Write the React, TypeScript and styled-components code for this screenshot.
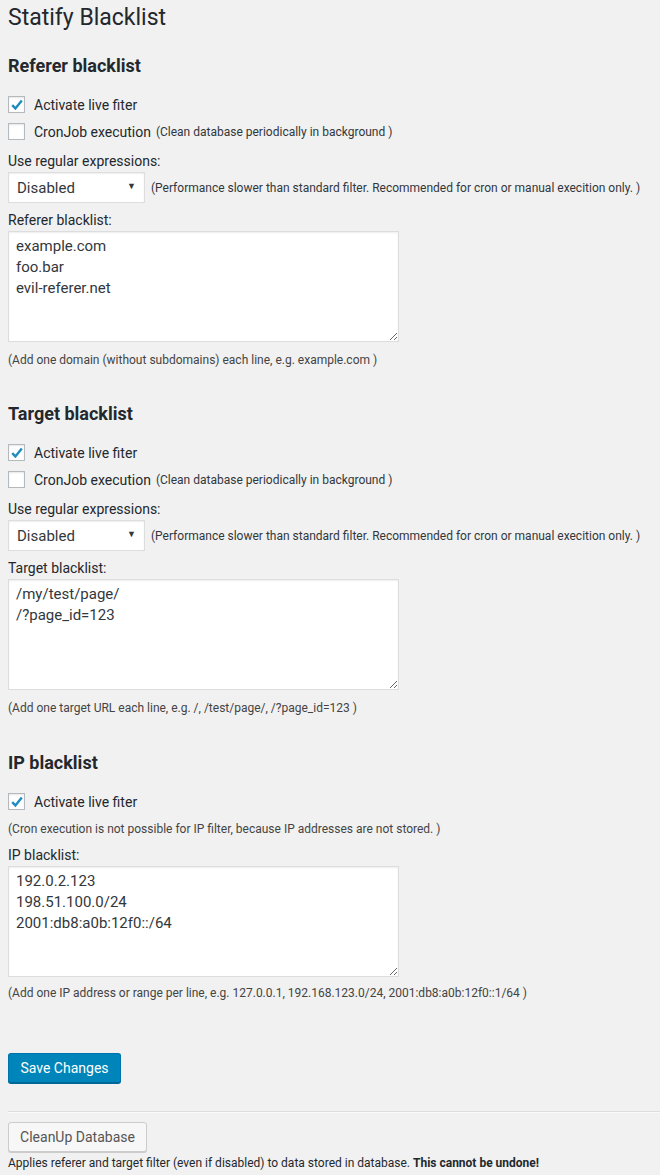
import styled, { createGlobalStyle } from "styled-components";

const GlobalStyle = createGlobalStyle`
  body {
    margin: 0;
    background: #f1f1f1;
    color: #23282d;
    font-family: Roboto, "Liberation Sans", sans-serif;
    font-size: 14px;
  }
`;

interface FilterSection {
  title: string;
  live: boolean;
  cron?: boolean;
  listLabel: string;
  entries: string[];
  hint: string;
}

const sections: FilterSection[] = [
  {
    title: "Referer blacklist",
    live: true,
    cron: false,
    listLabel: "Referer blacklist:",
    entries: ["example.com", "foo.bar", "evil-referer.net"],
    hint: "(Add one domain (without subdomains) each line, e.g. example.com )",
  },
  {
    title: "Target blacklist",
    live: true,
    cron: false,
    listLabel: "Target blacklist:",
    entries: ["/my/test/page/", "/?page_id=123"],
    hint: "(Add one target URL each line, e.g. /, /test/page/, /?page_id=123 )",
  },
];

const Check = ({ checked }: { checked: boolean }) => (
  <Box>
    {checked && (
      <svg width="14" height="14" viewBox="0 0 14 14">
        <path d="M2.2 7.2 L5.4 10.4 L11.8 2.6" fill="none" stroke="#1e8cbe" strokeWidth="2.4" />
      </svg>
    )}
  </Box>
);

const RegexSelect = () => (
  <SelectRow>
    <SelectWrap>
      <Select defaultValue="0">
        <option value="0">Disabled</option>
        <option value="1">Case-sensitive</option>
        <option value="2">Case-insensitive</option>
      </Select>
      <Arrow>▼</Arrow>
    </SelectWrap>
    <Note>(Performance slower than standard filter. Recommended for cron or manual execition only. )</Note>
  </SelectRow>
);

export default function App() {
  return (
    <Page>
      <GlobalStyle />
      <Title>Statify Blacklist</Title>

      {sections.map((s, i) => (
        <Section key={s.title} $top={i === 0 ? 22 : 33}>
          <Heading>{s.title}</Heading>
          <CheckRow>
            <Check checked={s.live} />
            Activate live fiter
          </CheckRow>
          <CheckRow>
            <Check checked={!!s.cron} />
            CronJob execution <Note>(Clean database periodically in background )</Note>
          </CheckRow>
          <FieldLabel>Use regular expressions:</FieldLabel>
          <RegexSelect />
          <FieldLabel $gap={7}>{s.listLabel}</FieldLabel>
          <ListArea defaultValue={s.entries.join("\n")} />
          <Hint $gap={9}>{s.hint}</Hint>
        </Section>
      ))}

      <Section $top={34}>
        <Heading>IP blacklist</Heading>
        <CheckRow>
          <Check checked />
          Activate live fiter
        </CheckRow>
        <Hint $gap={5}>(Cron execution is not possible for IP filter, because IP addresses are not stored. )</Hint>
        <FieldLabel $gap={7}>IP blacklist:</FieldLabel>
        <ListArea defaultValue={["192.0.2.123", "198.51.100.0/24", "2001:db8:a0b:12f0::/64"].join("\n")} />
        <Hint $gap={7}>(Add one IP address or range per line, e.g. 127.0.0.1, 192.168.123.0/24, 2001:db8:a0b:12f0::1/64 )</Hint>
      </Section>

      <PrimaryButton>Save Changes</PrimaryButton>
      <Divider />
      <SecondaryButton>CleanUp Database</SecondaryButton>
      <Hint $gap={2} $dark>
        Applies referer and target filter (even if disabled) to data stored in database.{" "}
        <strong>This cannot be undone!</strong>
      </Hint>
    </Page>
  );
}

const Page = styled.div`
  padding: 3px 0 0 8px;
`;

const Title = styled.h1`
  margin: 0;
  font-size: 23px;
  font-weight: 400;
  line-height: 29px;
`;

const Section = styled.section<{ $top: number }>`
  display: flex;
  flex-direction: column;
  align-items: flex-start;
  margin-top: ${(p) => p.$top}px;
`;

const Heading = styled.h2`
  margin: 0 0 13px;
  font-size: 18px;
  font-weight: 700;
  line-height: 24px;
`;

const CheckRow = styled.label`
  display: flex;
  align-items: center;
  gap: 9px;
  height: 27px;
  font-size: 14px;
`;

const Box = styled.span`
  box-sizing: border-box;
  width: 17px;
  height: 17px;
  display: flex;
  align-items: center;
  justify-content: center;
  background: #fff;
  border: 1px solid #b4b9be;
  box-shadow: inset 0 1px 2px rgba(0, 0, 0, 0.1);
`;

const Note = styled.span`
  font-size: 12px;
  color: #32373c;
  margin-left: -4px;
`;

const FieldLabel = styled.div<{ $gap?: number }>`
  margin-top: ${(p) => p.$gap ?? 6}px;
  line-height: 20px;
  font-size: 14px;
`;

const SelectRow = styled.div`
  display: flex;
  align-items: center;
  gap: 9px;
  margin-top: 1px;

  & > ${Note} {
    margin-left: -3px;
  }
`;

const SelectWrap = styled.div`
  position: relative;
`;

const Select = styled.select`
  appearance: none;
  box-sizing: border-box;
  width: 137px;
  height: 31px;
  padding: 0 8px;
  background: #fff;
  border: 1px solid #ddd;
  box-shadow: inset 0 1px 2px rgba(0, 0, 0, 0.07);
  color: #32373c;
  font-family: Roboto, "Liberation Sans", sans-serif;
  font-size: 15px;
  outline: none;
`;

const Arrow = styled.span`
  position: absolute;
  right: 9px;
  top: 9px;
  font-size: 9px;
  color: #32373c;
  pointer-events: none;
`;

const ListArea = styled.textarea`
  box-sizing: border-box;
  width: 391px;
  height: 111px;
  margin-top: 1px;
  padding: 4px 7px 2px;
  background: #fff;
  border: 1px solid #ddd;
  box-shadow: inset 0 1px 2px rgba(0, 0, 0, 0.07);
  color: #32373c;
  font-family: Roboto, "Liberation Sans", sans-serif;
  font-size: 15px;
  line-height: 21px;
  outline: none;
`;

const Hint = styled.div<{ $gap?: number; $dark?: boolean }>`
  margin-top: ${(p) => p.$gap ?? 6}px;
  font-size: 12px;
  line-height: 18px;
  color: ${(p) => (p.$dark ? "#23282d" : "#444")};
`;

const ButtonBase = styled.button`
  box-sizing: border-box;
  display: block;
  height: 30px;
  padding: 0 11px;
  border-radius: 3px;
  font-family: Roboto, "Liberation Sans", sans-serif;
  font-size: 14px;
  cursor: pointer;
`;

const PrimaryButton = styled(ButtonBase)`
  margin-top: 51px;
  width: 113px;
  background: #0085ba;
  border: 1px solid #0073aa;
  border-bottom-color: #006799;
  box-shadow: 0 1px 0 #006799;
  color: #fff;
`;

const Divider = styled.hr`
  margin: 28px 0 9px;
  border: 0;
  border-top: 1px solid #ddd;
  border-bottom: 1px solid #fafafa;
`;

const SecondaryButton = styled(ButtonBase)`
  width: 139px;
  background: #f7f7f7;
  border: 1px solid #ccc;
  box-shadow: 0 1px 0 #ccc;
  color: #555;
`;
